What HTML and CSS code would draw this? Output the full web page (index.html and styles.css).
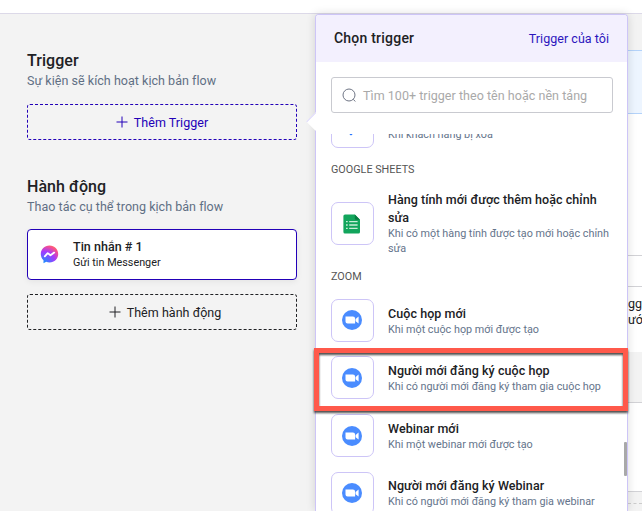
FILE: index.html
```html
<!DOCTYPE html>
<html lang="vi">
<head>
<meta charset="utf-8">
<title>Flow</title>
<link rel="stylesheet" href="styles.css">
</head>
<body>
<svg class="defs" width="0" height="0">
  <symbol id="zoom" viewBox="0 0 20 20">
    <circle cx="10" cy="10" r="10" fill="#4a8cff"/>
    <path d="M3.500 6.400h7.400a2.200 2.200 0 0 1 2.200 2.200v5H5.600a2.100 2.100 0 0 1-2.100-2.100zM13.600 9l3-2.400v7l-3-2.400z" fill="#fff"/>
  </symbol>
  <symbol id="plus" viewBox="0 0 12 12">
    <path d="M6 .5v11M.5 6h11" stroke="currentColor" fill="none"/>
  </symbol>
</svg>
<header class="topbar"></header>
<main class="workspace">
  <section class="flow">
    <h2>Trigger</h2>
    <p class="hint">Sự kiện sẽ kích hoạt kịch bản flow</p>
    <button class="add primary"><svg width="12" height="12"><use href="#plus"/></svg><span>Thêm Trigger</span></button>
    <h2 class="second">Hành động</h2>
    <p class="hint">Thao tác cụ thể trong kịch bản flow</p>
    <div class="card">
      <svg width="19" height="19" viewBox="0 0 19 19">
        <defs><radialGradient id="msg" cx=".18" cy="1" r="1.1"><stop offset="0" stop-color="#1292ff"/><stop offset=".6" stop-color="#a43aff"/><stop offset=".9" stop-color="#f5508f"/><stop offset="1" stop-color="#ff6868"/></radialGradient></defs>
        <path d="M9.500.5C4.400.5.8 4.200.8 9c0 2.600 1 4.700 2.700 6.200v3l2.700-1.400c1 .4 2.100.6 3.300.6 5.100 0 8.700-3.700 8.700-8.400S14.600.5 9.500.5z" fill="url(#msg)"/>
        <path d="M4.800 11.400l2.900-3.300 2.800 2.200 3.700-2.700" fill="none" stroke="#fff" stroke-width="1.800" stroke-linecap="round" stroke-linejoin="round"/>
      </svg>
      <div><strong>Tin nhắn # 1</strong><small>Gửi tin Messenger</small></div>
    </div>
    <button class="add action"><svg width="12" height="12"><use href="#plus"/></svg><span>Thêm hành động</span></button>
  </section>
  <aside class="picker">
    <div class="picker-head"><b>Chọn trigger</b><a>Trigger của tôi</a></div>
    <div class="search">
      <svg width="15" height="15" viewBox="0 0 15 15" fill="none" stroke="#6f7585"><circle cx="7" cy="7" r="6"/><path d="M11.300 11.300l2 2.200"/></svg>
      <span>Tìm 100+ trigger theo tên hoặc nền tảng</span>
    </div>
    <div class="list">
      <div class="item clipped">
        <div class="tile"><svg width="20" height="20" viewBox="0 0 20 20"><path d="M4 3h10v11l-5 4.500-5-4.500z" fill="#176bff"/></svg></div>
        <div class="copy"><small>Khi khách hàng bị xóa</small></div>
      </div>
      <h3>GOOGLE SHEETS</h3>
      <div class="item tall">
        <div class="tile"><svg width="18" height="20" viewBox="0 0 18 20"><path d="M2 .5h9.800L17 5.700v12.200a1.600 1.600 0 0 1-1.600 1.600H2A1.600 1.600 0 0 1 .4 17.900V2.100A1.600 1.600 0 0 1 2 .5z" fill="#12a55c"/><path d="M11.800.5L17 5.700h-4a1.200 1.200 0 0 1-1.200-1.200z" fill="#087b40"/><path d="M3 7.600h1.700M3 11h1.700M3 14.400h1.700M6.200 7.600h8.400M6.200 11h8.400M6.200 14.400h8.400" stroke="#c9ecd8" stroke-width="1.300"/></svg></div>
        <div class="copy"><strong>Hàng tính mới được thêm hoặc chỉnh sửa</strong><small>Khi có một hàng tính được tạo mới hoặc chỉnh sửa</small></div>
      </div>
      <h3 class="lower">ZOOM</h3>
      <div class="item">
        <div class="tile"><svg width="20" height="20"><use href="#zoom"/></svg></div>
        <div class="copy"><strong>Cuộc họp mới</strong><small>Khi một cuộc họp mới được tạo</small></div>
      </div>
      <div class="item">
        <div class="tile"><svg width="20" height="20"><use href="#zoom"/></svg></div>
        <div class="copy"><strong>Người mới đăng ký cuộc họp</strong><small>Khi có người mới đăng ký tham gia cuộc họp</small></div>
      </div>
      <div class="item">
        <div class="tile"><svg width="20" height="20"><use href="#zoom"/></svg></div>
        <div class="copy"><strong>Webinar mới</strong><small>Khi một webinar mới được tạo</small></div>
      </div>
      <div class="item">
        <div class="tile"><svg width="20" height="20"><use href="#zoom"/></svg></div>
        <div class="copy"><strong>Người mới đăng ký Webinar</strong><small>Khi có người mới đăng ký tham gia webinar</small></div>
      </div>
    </div>
    <i class="arrow"></i>
    <i class="thumb"></i>
    <i class="highlight"></i>
  </aside>
  <section class="detail">
    <div class="notice"></div>
    <div class="body"><div class="field"></div><p>gg<br>ướ</p></div>
    <div class="box"></div>
    <div class="dash"></div>
  </section>
</main>
</body>
</html>
```
FILE: styles.css
```css
* { box-sizing: border-box; }
body {
  margin: 0;
  height: 511px;
  overflow: hidden;
  background: #f3f3f3;
  color: #202124;
  font-family: Roboto, "Noto Sans", sans-serif;
}
svg { display: block; flex: none; }
.defs { position: absolute; }
h2, h3, p { margin: 0; }
strong, small { display: block; }
.topbar { height: 14px; background: #fff; border-bottom: 1px solid #dcd9e8; }
.workspace { display: grid; grid-template-columns: 315px 313px 14px; height: 497px; }

.flow { padding: 36px 18px 0 27px; }
h2 { font-size: 16px; line-height: 22px; font-weight: 500; letter-spacing: .05px; }
h2.second { margin-top: 36px; }
.hint { margin-top: 1px; font-size: 12.5px; line-height: 16px; letter-spacing: .03px; color: #5f6f84; }
.add {
  display: flex; align-items: center; justify-content: center; gap: 6px;
  width: 270px; height: 36px; margin: 15px 0 0; padding: 0;
  border: 1px dashed #202124; border-radius: 3px; background: none;
  font: 12.5px/18px Roboto, sans-serif; letter-spacing: .03px; color: #202124;
}
.add span { padding-top: 1px; }
.add.primary { color: #2200b8; border-color: #2200b8; }
.add.action { margin-top: 14px; padding-left: 6px; }
.card {
  display: flex; align-items: center; gap: 14px;
  width: 270px; height: 51px; margin-top: 14px; padding-left: 12px;
  border: 1px solid #2200b8; border-radius: 4px; background: #fff;
  box-shadow: 0 2px 6px rgba(0, 0, 0, .06);
}
.card strong { font-size: 12.5px; line-height: 16px; font-weight: 500; letter-spacing: .03px; }
.card small { font-size: 10.8px; line-height: 15px; }

.picker {
  position: relative; display: flex; flex-direction: column; height: 497px;
  border: 1px solid #cdc5f7; border-bottom: 0; border-radius: 4px 4px 0 0; background: #fff;
  box-shadow: 0 0 10px rgba(0, 0, 0, .14);
}
.picker-head {
  display: flex; align-items: center; justify-content: space-between; flex: none;
  height: 47px; padding: 0 18px 1px; border-radius: 3px 3px 0 0; background: #f3f0fe;
}
.picker-head b { font-size: 14px; font-weight: 500; letter-spacing: .22px; }
.picker-head a { font-size: 12.5px; letter-spacing: .03px; color: #2c16bd; }
.search {
  display: flex; align-items: center; gap: 6px; flex: none;
  height: 36px; margin: 15px 14px 0 15px; padding-left: 10px;
  border: 1px solid #c9cad0; border-radius: 3px;
  font-size: 12.5px; letter-spacing: .04px; color: #a9a9a9;
}
.list { flex: 1; min-height: 0; margin-top: 21px; padding: 0 15px; overflow: hidden; }
.item { display: flex; align-items: center; gap: 14px; height: 57.6px; }
.item.clipped { margin-top: -36px; }
.item.clipped .copy { padding-top: 17px; }
.item.tall { height: 72px; }
.tile {
  display: grid; place-items: center; flex: none; width: 43px; height: 43px;
  border: 1px solid #cdc5f7; border-radius: 7px;
}
.tile svg { margin-right: 1px; }
.copy { padding-top: 1px; }
.item.tall .copy { padding: 0; }
.item.tall small { margin: -1px 0 1px; line-height: 15px; }
.copy strong { font-size: 12.5px; line-height: 18px; font-weight: 500; letter-spacing: .06px; }
.copy small { font-size: 10.8px; line-height: 14.5px; color: #64748b; }
h3 { height: 32px; padding-top: 7px; font-size: 10.8px; line-height: 14px; font-weight: 400; color: #555; }
h3.lower { padding-top: 10px; }
.arrow {
  position: absolute; left: -7px; top: 100px; width: 13px; height: 13px;
  background: #fff; border: 1px solid #dcd7fa; border-width: 0 0 0 1px;
  transform: rotate(45deg);
}
.thumb { position: absolute; right: 0; top: 427px; width: 3px; height: 34px; background: #a9a9a9; border-radius: 1px; }
.highlight {
  position: absolute; left: -2px; top: 333px; width: 314px; height: 63px;
  border: 5px solid #ff594b;
  filter: drop-shadow(0 2px 1px rgba(0, 0, 0, .7));
}

.detail { overflow: hidden; padding-top: 36px; }
.notice { height: 64px; background: #edf5ff; border: solid #b4d3fa; border-width: 1px 0; }
.body { height: 238px; padding-top: 141px; background: #fff; }
.field { height: 32px; border: solid #d2d2d6; border-width: 1px 0; }
.body p { margin-top: 9px; font-size: 12.5px; line-height: 16px; }
.box { height: 90px; margin-top: 50px; background: #fff; border: solid #d2d2d6; border-width: 1px 0; }
.dash { margin-top: 11px; border-top: 1px dashed #ccc; }
```
